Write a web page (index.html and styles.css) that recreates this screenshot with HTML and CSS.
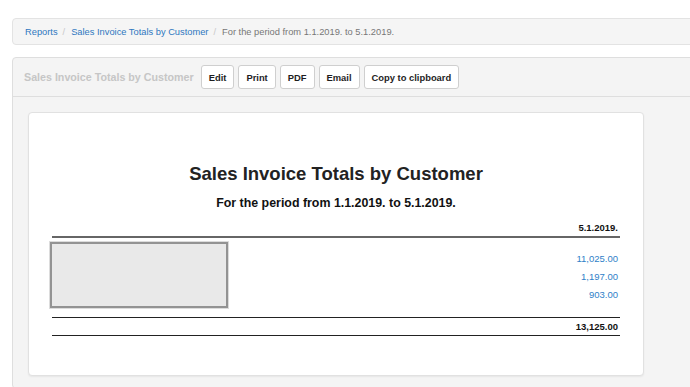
FILE: index.html
```html
<!DOCTYPE html>
<html>
<head>
<meta charset="utf-8">
<link rel="stylesheet" href="styles.css">
</head>
<body>
<div class="page">
  <nav class="breadcrumb">
    <a class="crumb-link">Reports</a><span class="sep">/</span>
    <a class="crumb-link">Sales Invoice Totals by Customer</a><span class="sep">/</span>
    <span class="crumb-active">For the period from 1.1.2019. to 5.1.2019.</span>
  </nav>
  <section class="panel">
    <div class="panel-header">
      <span class="panel-title">Sales Invoice Totals by Customer</span>
      <button class="btn">Edit</button>
      <button class="btn">Print</button>
      <button class="btn">PDF</button>
      <button class="btn">Email</button>
      <button class="btn">Copy to clipboard</button>
    </div>
    <div class="panel-body">
      <div class="report">
        <h1 class="report-title">Sales Invoice Totals by Customer</h1>
        <h2 class="report-sub">For the period from 1.1.2019. to 5.1.2019.</h2>
        <div class="head-row">5.1.2019.</div>
        <div class="rows">
          <div class="redact"></div>
          <div class="row">11,025.00</div>
          <div class="row">1,197.00</div>
          <div class="row">903.00</div>
        </div>
        <div class="total-row">13,125.00</div>
      </div>
    </div>
  </section>
</div>
</body>
</html>
```

FILE: styles.css
```css
html, body {
  margin: 0;
  padding: 0;
  background: #ffffff;
  overflow: hidden;
}
body {
  font-family: "Liberation Sans", Arial, Helvetica, sans-serif;
  color: #222;
}
.page {
  width: 700px;
  padding: 18px 0 0 12px;
}
.breadcrumb {
  display: flex;
  align-items: center;
  height: 25px;
  padding: 0 11px 0 12px;
  background: #f5f5f5;
  border: 1px solid #e3e3e3;
  border-radius: 4px;
  font-size: 9.3px;
}
.crumb-link {
  color: #2f77c0;
}
.sep {
  color: #c8c8c8;
  padding: 0 6px 0 5px;
}
.crumb-active {
  color: #777;
}
.panel {
  margin-top: 12px;
  background: #f4f4f4;
  border: 1px solid #dedede;
  border-radius: 4px;
}
.panel-header {
  display: flex;
  align-items: center;
  gap: 4px;
  height: 38px;
  padding: 0 11px;
  border-bottom: 1px solid #dedede;
}
.panel-title {
  font-size: 10.7px;
  font-weight: bold;
  color: #c6c6c6;
  margin-right: 3px;
}
.btn {
  height: 24px;
  padding: 0 7px;
  background: #fff;
  border: 1px solid #cfcfcf;
  border-radius: 3px;
  font-family: "Liberation Sans", Arial, sans-serif;
  font-size: 9.4px;
  font-weight: bold;
  color: #1e1e1e;
}
.panel-body {
  padding: 15px 15px 12px;
}
.report {
  width: 568px;
  padding: 49px 23px 39px;
  background: #fff;
  border: 1px solid #e1e1e1;
  border-radius: 4px;
  box-shadow: 0 1px 2px rgba(0,0,0,0.06);
}
.report-title {
  margin: 0;
  text-align: center;
  font-size: 18.5px;
  line-height: 24px;
  font-weight: bold;
  color: #222;
}
.report-sub {
  margin: 8px 0 0;
  text-align: center;
  font-size: 12.4px;
  line-height: 18px;
  font-weight: bold;
  color: #111;
}
.head-row {
  margin-top: 9px;
  padding: 0 2px 1px 0;
  text-align: right;
  font-size: 9.5px;
  line-height: 14px;
  font-weight: bold;
  color: #111;
  border-bottom: 2px solid #666;
}
.rows {
  position: relative;
  padding: 12px 0 13px;
}
.row {
  text-align: right;
  padding-right: 2px;
  font-size: 9.5px;
  line-height: 18px;
  color: #2f7fc8;
}
.redact {
  position: absolute;
  left: -2px;
  top: 4px;
  width: 174px;
  height: 62px;
  background: #e9e9e9;
  border: 2px solid #939393;
  box-shadow: 0 0 0 1px #dcdcdc;
}
.total-row {
  border-top: 1.5px solid #222;
  border-bottom: 1.5px solid #222;
  text-align: right;
  padding: 1px 2px 1px 0;
  font-size: 9.5px;
  line-height: 15px;
  font-weight: bold;
  color: #111;
}
```
